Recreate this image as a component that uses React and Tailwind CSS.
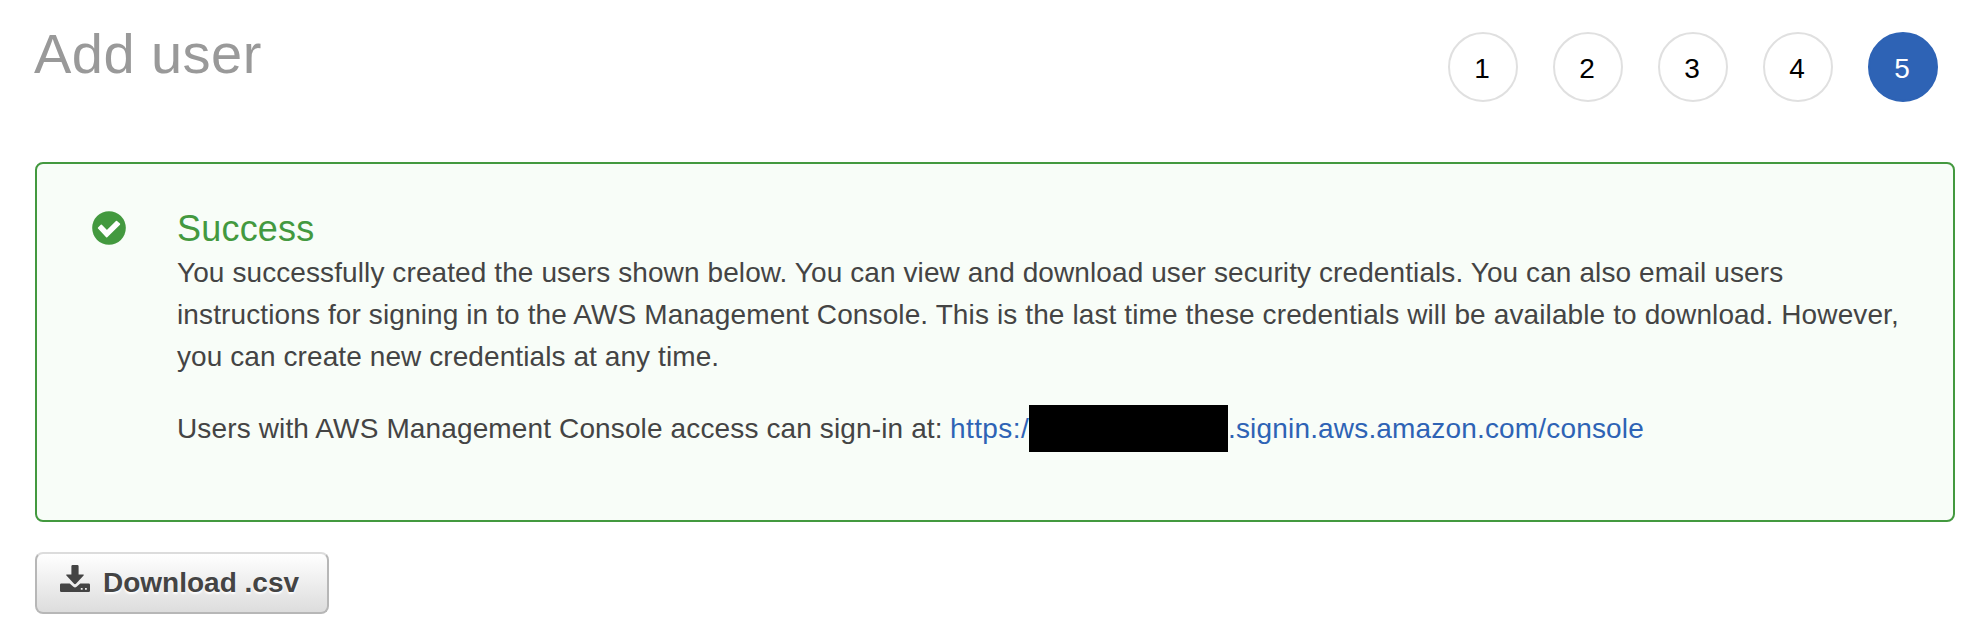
const STEPS = [1, 2, 3, 4, 5];

function Step({ n, active }) {
  return (
    <li
      className={
        "flex size-[70px] items-center justify-center rounded-full border-2 pt-1 pr-[2px] text-[28px] leading-none " +
        (active ? "border-[#2e63b5] bg-[#2e63b5] text-white" : "border-[#e0e0e0] bg-white text-black")
      }
    >
      {n}
    </li>
  );
}

function SuccessIcon() {
  return (
    <svg viewBox="0 0 34 34" className="size-[34px]" aria-hidden="true">
      <circle cx="17" cy="17" r="16.8" fill="#43993f" />
      <path
        d="M6.600 17l2.700-2.600L14.900 20 24.500 10.600 27.400 13.100 14.700 25.600z"
        fill="#fff"
        stroke="#fff"
        strokeWidth="1.6"
        strokeLinejoin="round"
      />
    </svg>
  );
}

function DownloadIcon() {
  return (
    <svg viewBox="0 0 30 28" className="h-7 w-[30px]" fill="#444" aria-hidden="true">
      <path d="M12.600 0h4.800q1.200 0 1.200 1.200v8.200h4.400q1.600 0 .6 1.200L16.200 18.600q-1.200 1.100-2.400 0L6.400 10.600q-1-1.200.6-1.200h4.400V1.200q0-1.200 1.200-1.200z" />
      <path
        fillRule="evenodd"
        d="M1.300 18.400H9.700l3.700 3.400q1.600 1.300 3.200 0l3.700-3.400h8.400q1.300 0 1.300 1.300v6q0 1.300-1.300 1.300H1.300Q0 27 0 25.700v-6q0-1.300 1.300-1.300zM20.800 23v1.800h1.800v-1.800zM25 23v1.800h1.800v-1.800z"
      />
    </svg>
  );
}

export default function App() {
  return (
    <main className="h-[642px] w-[1984px] overflow-hidden bg-white pl-[35px] pr-[29px] font-['Liberation_Sans',Arial,sans-serif] text-[#444]">
      <header className="flex h-[162px] items-start justify-between pr-[17px] pt-8">
        <h1 className="-ml-px -mt-[10px] whitespace-nowrap text-[56px] leading-[64px] tracking-[0.45px] text-[#999]">Add user</h1>
        <ol className="flex gap-[35px]">
          {STEPS.map((n) => (
            <Step key={n} n={n} active={n === 5} />
          ))}
        </ol>
      </header>

      <section className="flex h-[360px] rounded-lg border-2 border-[#43993f] bg-[#f8fdf8] pl-[55px] pt-[44px]">
        <div className="w-[85px] shrink-0 pt-[3px]">
          <SuccessIcon />
        </div>
        <div className="whitespace-nowrap text-[28px] leading-[42px]">
          <h2 className="pb-[2px] text-[36px] leading-[42px] tracking-[0.2px] text-[#43993f]">Success</h2>
          <p>
            <span className="block tracking-[0.095px]">You successfully created the users shown below. You can view and download user security credentials. You can also email users</span>
            <span className="block tracking-[0.117px]">instructions for signing in to the AWS Management Console. This is the last time these credentials will be available to download. However,</span>
            <span className="block tracking-[0.085px]">you can create new credentials at any time.</span>
          </p>
          <p className="mt-[27px] flex items-center">
            <span className="w-[773px] tracking-[0.13px]">Users with AWS Management Console access can sign-in at:</span>
            <a className="flex items-center text-[#2e63b5]">
              <span className="w-[79px] overflow-hidden tracking-[0.4px]">https:/</span>
              <span className="h-[47px] w-[199px] bg-black" />
              <span className="tracking-[0.17px]">.signin.aws.amazon.com/console</span>
            </a>
          </p>
        </div>
      </section>

      <button className="mt-[30px] flex h-[62px] w-[294px] items-center rounded-lg border-2 border-[#b7b7b7] border-t-[#dcdcdc] bg-linear-to-b from-white to-[#dddddd] pl-[23px] text-[28px] font-bold leading-none text-[#444]">
        <span className="pb-2">
          <DownloadIcon />
        </span>
        <span className="ml-[13px] whitespace-nowrap [text-shadow:0_2px_2px_#fff]">Download .csv</span>
      </button>
    </main>
  );
}
